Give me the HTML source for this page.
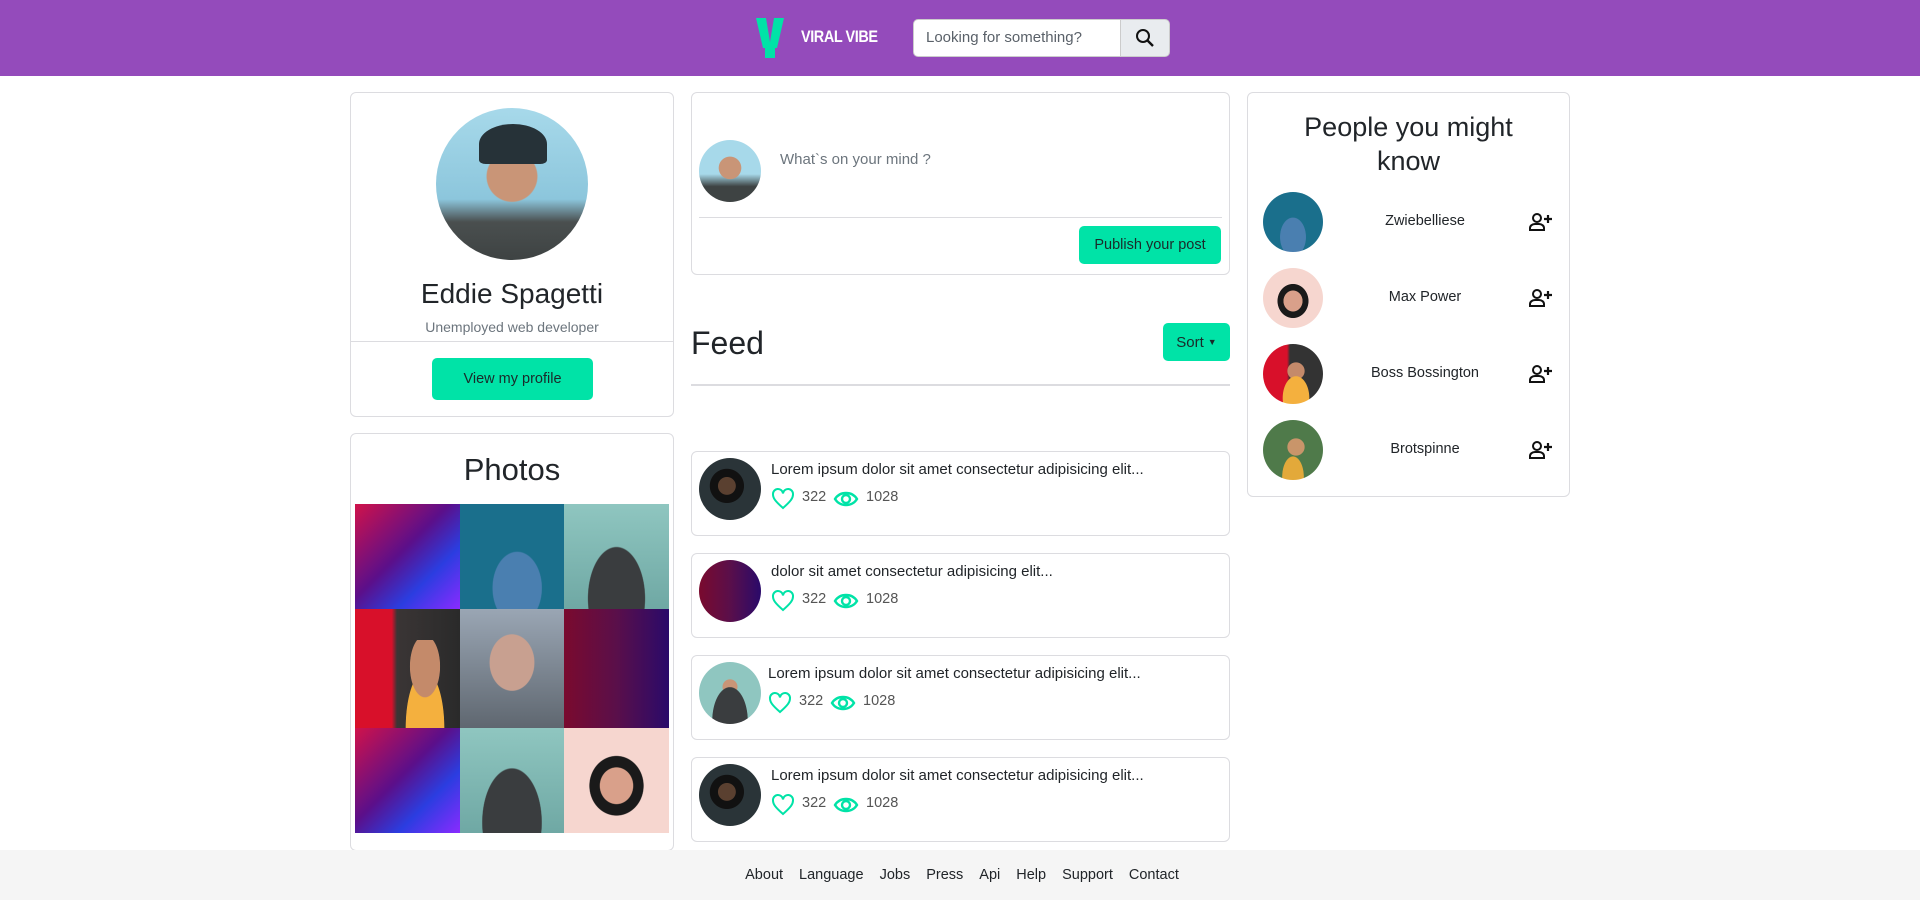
<!DOCTYPE html>
<html><head><meta charset="utf-8"><style>
*{box-sizing:border-box;margin:0;padding:0}
body{width:1920px;height:919px;position:relative;background:#fff;font-family:"Liberation Sans",sans-serif;color:#212529;overflow:hidden}
.a{position:absolute}
.card{position:absolute;border:1px solid #dcdce0;border-radius:6px;background:#fff}
.btn{position:absolute;background:#00e3a7;border-radius:5px;color:#1a2a2a;font-size:15px;display:flex;align-items:center;justify-content:center}
.av{position:absolute;border-radius:50%;overflow:hidden}
.t{position:absolute;white-space:nowrap}
</style></head><body>
<div class="a" style="left:0;top:0;width:1920px;height:76px;background:#944bbb"></div>
<svg class="a" style="left:755px;top:18px" width="30" height="41" viewBox="0 0 30 41"><path d="M1 0H11L15 24L19 0H29L22 30H20V40H10V30H8Z" fill="#00e3a7"/></svg>
<div class="t" style="left:801px;top:27px;color:#fff;font-weight:bold;font-size:17px;letter-spacing:-0.5px;transform:scaleX(0.85);transform-origin:left">VIRAL VIBE</div>
<div class="a" style="left:913px;top:19px;width:208px;height:38px;background:#fff;border-radius:5px 0 0 5px;border:1px solid #ccc"></div>
<div class="t" style="left:926px;top:29px;font-size:15px;color:#5a6169">Looking for something?</div>
<div class="a" style="left:1120px;top:19px;width:50px;height:38px;background:#e9ecef;border-radius:0 5px 5px 0;border:1px solid #ccc"></div>
<svg class="a" style="left:1135px;top:28px" width="20" height="20" viewBox="0 0 20 20"><circle cx="8" cy="8" r="6" fill="none" stroke="#111" stroke-width="2"/><path d="M12.5 12.5L18 18" stroke="#111" stroke-width="2.4"/></svg>

<div class="card" style="left:350px;top:92px;width:324px;height:325px"></div>
<div class="av" style="left:436px;top:108px;width:152px;height:152px;background:radial-gradient(circle at 50% 45%,#c99577 0 22%,transparent 23%),linear-gradient(#a7d9ea 0%,#8cc6dc 60%,#4a4f4f 75%,#3e4343 100%)"></div>
<div class="av" style="left:479px;top:124px;width:68px;height:40px;border-radius:50% 50% 10% 10%;background:#263238"></div>
<div class="t" style="left:350px;width:324px;text-align:center;top:278px;font-size:28px">Eddie Spagetti</div>
<div class="t" style="left:350px;width:324px;text-align:center;top:319px;font-size:14px;color:#6c757d">Unemployed web developer</div>
<div class="a" style="left:351px;top:341px;width:322px;height:1px;background:#dcdce0"></div>
<div class="btn" style="left:432px;top:358px;width:161px;height:42px;font-size:14.5px">View my profile</div>

<div class="card" style="left:350px;top:433px;width:324px;height:418px"></div>
<div class="t" style="left:350px;width:324px;text-align:center;top:452px;font-size:31px">Photos</div>
<div class="a" style="left:355px;top:504px;width:105px;height:105px;background:linear-gradient(135deg,#d0124a,#5b0f8a 45%,#2b3de0 70%,#8a2bff)"></div>
<div class="a" style="left:460px;top:504px;width:104px;height:105px;background:radial-gradient(ellipse at 55% 80%,#4a7fb0 0 30%,transparent 31%),#1a6f8c"></div>
<div class="a" style="left:564px;top:504px;width:105px;height:105px;background:radial-gradient(ellipse at 50% 90%,#3a3d3f 0 38%,transparent 39%),linear-gradient(#8fc6c0,#6fa8a4)"></div>
<div class="a" style="left:355px;top:609px;width:105px;height:119px;background:linear-gradient(90deg,#d8102a 0 35%,#3a3535 40%,#2a2a2a),#333"></div>
<div class="a" style="left:395px;top:640px;width:60px;height:88px;background:radial-gradient(ellipse at 50% 30%,#c48a6a 0 35%,transparent 36%),radial-gradient(ellipse at 50% 100%,#f4b03e 0 45%,transparent 46%)"></div>
<div class="a" style="left:460px;top:609px;width:104px;height:119px;background:radial-gradient(ellipse at 50% 45%,#c8a090 0 30%,transparent 31%),linear-gradient(#9aa6b4,#5f6770)"></div>
<div class="a" style="left:564px;top:609px;width:105px;height:119px;background:linear-gradient(90deg,#7a0a2e,#5a0f4a 50%,#2a0a6a)"></div>
<div class="a" style="left:355px;top:728px;width:105px;height:105px;background:linear-gradient(135deg,#d0124a,#5b0f8a 45%,#2b3de0 70%,#8a2bff)"></div>
<div class="a" style="left:460px;top:728px;width:104px;height:105px;background:radial-gradient(ellipse at 50% 90%,#3a3d3f 0 40%,transparent 41%),linear-gradient(#8fc6c0,#6fa8a4)"></div>
<div class="a" style="left:564px;top:728px;width:105px;height:105px;background:radial-gradient(ellipse at 50% 55%,#d9a08a 0 22%,#1a1a1a 23% 36%,transparent 37%),#f6d6cf"></div>

<div class="card" style="left:691px;top:92px;width:539px;height:183px"></div>
<div class="av" style="left:699px;top:140px;width:62px;height:62px;background:radial-gradient(circle at 50% 45%,#c99577 0 24%,transparent 25%),linear-gradient(#a7d9ea 55%,#3e4343 75%)"></div>
<div class="t" style="left:780px;top:151px;font-size:15px;color:#6c757d">What`s on your mind ?</div>
<div class="a" style="left:699px;top:217px;width:523px;height:1px;background:#dcdce0"></div>
<div class="btn" style="left:1079px;top:226px;width:142px;height:38px;font-size:14.5px">Publish your post</div>

<div class="t" style="left:691px;top:325px;font-size:32px">Feed</div>
<div class="btn" style="left:1163px;top:323px;width:67px;height:38px">Sort <span style="font-size:9px;margin-left:4px">▼</span></div>
<div class="a" style="left:691px;top:384px;width:539px;height:2px;background:#dcdce0"></div>

<div class="card" style="left:691px;top:451px;width:539px;height:85px"></div>
<div class="av" style="left:699px;top:458px;width:62px;height:62px;background:radial-gradient(circle at 45% 45%,#5a4030 0 18%,#111 19% 35%,transparent 36%),#2a3438"></div>
<div class="t" style="left:771px;top:461px;font-size:15px">Lorem ipsum dolor sit amet consectetur adipisicing elit...</div>
<div class="card" style="left:691px;top:553px;width:539px;height:85px"></div>
<div class="av" style="left:699px;top:560px;width:62px;height:62px;background:linear-gradient(90deg,#7a0a2e,#5a0f4a 50%,#2a0a6a)"></div>
<div class="t" style="left:771px;top:563px;font-size:15px">dolor sit amet consectetur adipisicing elit...</div>
<div class="card" style="left:691px;top:655px;width:539px;height:85px"></div>
<div class="av" style="left:699px;top:662px;width:62px;height:62px;background:radial-gradient(ellipse at 50% 95%,#3a3d3f 0 40%,transparent 41%),radial-gradient(circle at 50% 40%,#c99577 0 15%,transparent 16%),#8fc6c0"></div>
<div class="t" style="left:768px;top:665px;font-size:15px">Lorem ipsum dolor sit amet consectetur adipisicing elit...</div>
<div class="card" style="left:691px;top:757px;width:539px;height:85px"></div>
<div class="av" style="left:699px;top:764px;width:62px;height:62px;background:radial-gradient(circle at 45% 45%,#5a4030 0 18%,#111 19% 35%,transparent 36%),#2a3438"></div>
<div class="t" style="left:771px;top:767px;font-size:15px">Lorem ipsum dolor sit amet consectetur adipisicing elit...</div>

<svg width="0" height="0" style="position:absolute"><defs>
<g id="st"><path d="M12 21C4 14 2 11 2 7.5a5 5 0 0 1 10-1a5 5 0 0 1 10 1c0 3.5-2 6.5-10 13.5z" fill="none" stroke="#00e3a7" stroke-width="2"/><path d="M64 12c5-8 17-8 22 0c-5 8-17 8-22 0z" fill="none" stroke="#00e3a7" stroke-width="2.4"/><circle cx="75" cy="12" r="4" fill="none" stroke="#00e3a7" stroke-width="2.4"/></g></defs></svg>
<svg class="a" style="left:771px;top:487px" width="90" height="24"><use href="#st"/></svg><div class="t" style="left:802px;top:489px;font-size:14.5px;color:#555">322</div><div class="t" style="left:866px;top:489px;font-size:14.5px;color:#555">1028</div>
<svg class="a" style="left:771px;top:589px" width="90" height="24"><use href="#st"/></svg><div class="t" style="left:802px;top:591px;font-size:14.5px;color:#555">322</div><div class="t" style="left:866px;top:591px;font-size:14.5px;color:#555">1028</div>
<svg class="a" style="left:768px;top:691px" width="90" height="24"><use href="#st"/></svg><div class="t" style="left:799px;top:693px;font-size:14.5px;color:#555">322</div><div class="t" style="left:863px;top:693px;font-size:14.5px;color:#555">1028</div>
<svg class="a" style="left:771px;top:793px" width="90" height="24"><use href="#st"/></svg><div class="t" style="left:802px;top:795px;font-size:14.5px;color:#555">322</div><div class="t" style="left:866px;top:795px;font-size:14.5px;color:#555">1028</div>

<div class="card" style="left:1247px;top:92px;width:323px;height:405px"></div>
<div class="t" style="left:1247px;width:323px;text-align:center;top:110px;font-size:27px;line-height:34px;white-space:normal;padding:0 40px">People you might know</div>
<svg width="0" height="0" style="position:absolute"><defs><g id="ad"><circle cx="8" cy="6" r="4" fill="none" stroke="#111" stroke-width="2"/><path d="M1 18v-2a5 4 0 0 1 5-4h4a5 4 0 0 1 5 4v2z" fill="none" stroke="#111" stroke-width="2"/><path d="M19 3v8M15 7h8" stroke="#111" stroke-width="2.2"/></g></defs></svg>
<div class="av" style="left:1263px;top:192px;width:60px;height:60px;background:radial-gradient(ellipse at 50% 75%,#4a7fb0 0 30%,transparent 31%),#1a6f8c"></div>
<div class="t" style="left:1340px;width:170px;text-align:center;top:213px;font-size:14.5px">Zwiebelliese</div>
<svg class="a" style="left:1529px;top:212px" width="24" height="20"><use href="#ad"/></svg>
<div class="av" style="left:1263px;top:268px;width:60px;height:60px;background:radial-gradient(ellipse at 50% 55%,#d9a08a 0 22%,#1a1a1a 23% 36%,transparent 37%),#f6d6cf"></div>
<div class="t" style="left:1340px;width:170px;text-align:center;top:289px;font-size:14.5px">Max Power</div>
<svg class="a" style="left:1529px;top:288px" width="24" height="20"><use href="#ad"/></svg>
<div class="av" style="left:1263px;top:344px;width:60px;height:60px;background:radial-gradient(ellipse at 55% 90%,#f4b03e 0 28%,transparent 29%),radial-gradient(circle at 55% 45%,#c48a6a 0 18%,transparent 19%),linear-gradient(90deg,#d8102a 40%,#333 45%)"></div>
<div class="t" style="left:1340px;width:170px;text-align:center;top:365px;font-size:14.5px">Boss Bossington</div>
<svg class="a" style="left:1529px;top:364px" width="24" height="20"><use href="#ad"/></svg>
<div class="av" style="left:1263px;top:420px;width:60px;height:60px;background:radial-gradient(circle at 55% 45%,#c9956a 0 18%,transparent 19%),radial-gradient(ellipse at 50% 95%,#e3a93a 0 25%,transparent 26%),#4f7a4a"></div>
<div class="t" style="left:1340px;width:170px;text-align:center;top:441px;font-size:14.5px">Brotspinne</div>
<svg class="a" style="left:1529px;top:440px" width="24" height="20"><use href="#ad"/></svg>

<div class="a" style="left:0;top:850px;width:1920px;height:50px;background:#f5f5f5;display:flex;justify-content:center;align-items:center;gap:16px;font-size:14.5px;padding-left:4px">
<span>About</span><span>Language</span><span>Jobs</span><span>Press</span><span>Api</span><span>Help</span><span>Support</span><span>Contact</span></div>
</body></html>
